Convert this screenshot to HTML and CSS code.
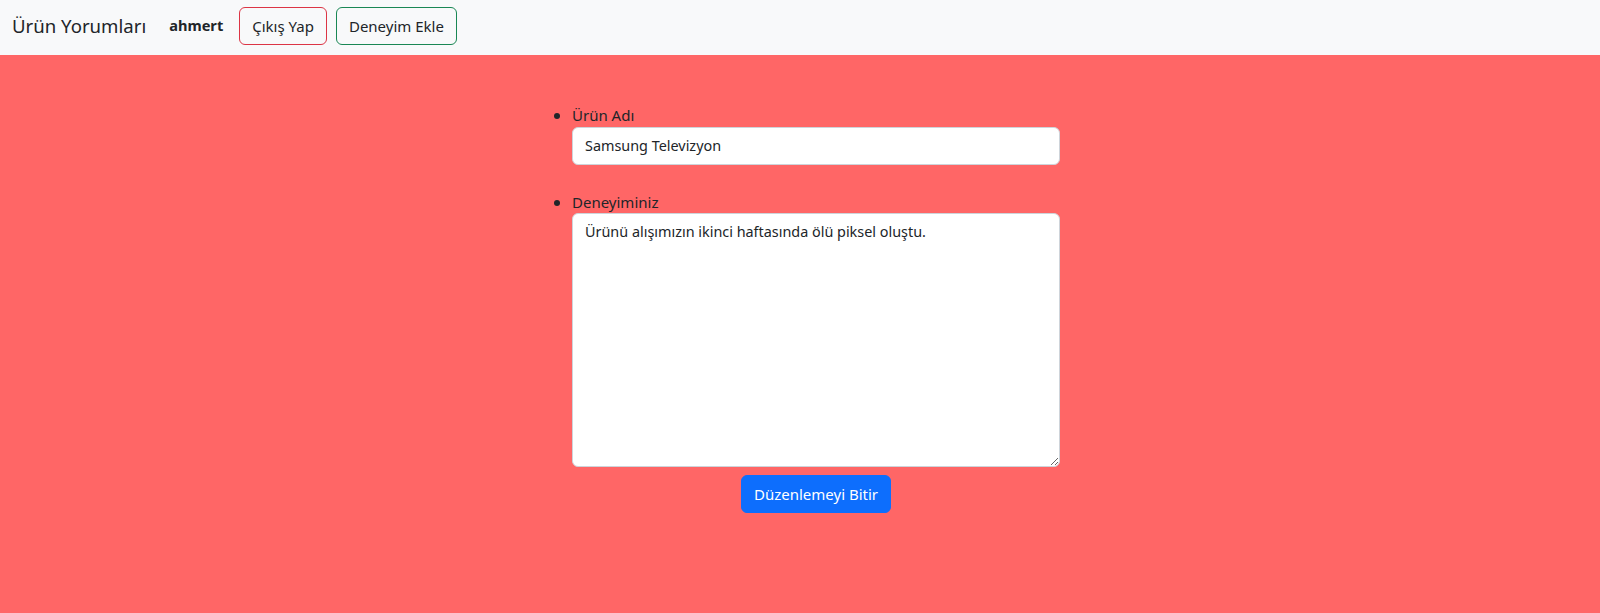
FILE: index.html
```html
<!DOCTYPE html>
<html lang="tr">
<head>
<meta charset="utf-8">
<title>Ürün Yorumları</title>
<link rel="stylesheet" href="styles.css">
</head>
<body>
<nav class="navbar">
  <a class="brand" href="#">Ürün Yorumları</a>
  <span class="user">ahmert</span>
  <a class="btn btn-outline-danger" href="#">Çıkış Yap</a>
  <a class="btn btn-outline-success" href="#">Deneyim Ekle</a>
</nav>
<main class="page">
  <form class="form">
    <ul class="fields">
      <li class="field">
        <label class="label" for="ad">Ürün Adı</label>
        <input class="control" id="ad" type="text" value="Samsung Televizyon">
      </li>
      <li class="field">
        <label class="label" for="deneyim">Deneyiminiz</label>
        <textarea class="control area" id="deneyim">Ürünü alışımızın ikinci haftasında ölü piksel oluştu.</textarea>
      </li>
    </ul>
    <div class="actions">
      <button class="btn btn-primary" type="submit">Düzenlemeyi Bitir</button>
    </div>
  </form>
</main>
</body>
</html>
```

FILE: styles.css
```css
* { box-sizing: border-box; }
html, body { height: 100%; }
body {
  margin: 0;
  background: #ff6666;
  color: #212529;
  font-family: "Noto Sans", "Open Sans", Arial, sans-serif;
  font-size: 16px;
  line-height: 1.5;
}
.navbar {
  display: flex;
  align-items: center;
  background: #f8f9fa;
  padding: 6px 12px 9px;
  height: 55px;
}
.brand {
  font-size: 18.6px;
  color: #212529;
  text-decoration: none;
  margin-right: 23px;
}
.user {
  font-weight: 700;
  font-size: 14.6px;
  margin-right: 16px;
}
.btn {
  display: inline-block;
  font-family: inherit;
  font-size: 15px;
  line-height: 24px;
  padding: 6px 12px;
  border: 1px solid transparent;
  border-radius: 6px;
  text-decoration: none;
  color: #212529;
  background: transparent;
  cursor: pointer;
}
.btn-outline-danger { border-color: #dc3545; margin-right: 9px; }
.btn-outline-success { border-color: #198754; }
.btn-primary {
  background: #0d6efd;
  border-color: #0d6efd;
  color: #fff;
}
.page { padding-top: 48px; }
.form { width: 520px; margin: 0 auto; }
.fields {
  margin: 0;
  padding-left: 32px;
  list-style: disc;
}
.field { margin-bottom: 25px; }
.field:last-child { margin-bottom: 8px; }
.label { display: block; font-size: 15px; }
.control {
  display: block;
  width: 100%;
  font-family: inherit;
  font-size: 14.4px;
  line-height: 24px;
  color: #212529;
  background: #fff;
  border: 1px solid #ced4da;
  border-radius: 6px;
  padding: 6px 12px;
}
.area { height: 254px; resize: vertical; }
.actions {
  padding-left: 32px;
  display: flex;
  justify-content: center;
}
```
